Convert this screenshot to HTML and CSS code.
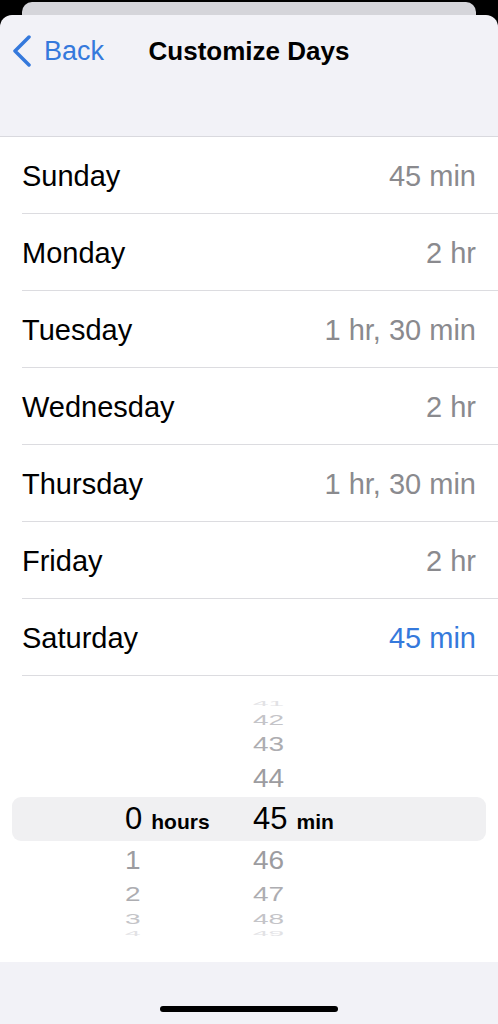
FILE: index.html
```html
<!DOCTYPE html>
<html lang="en">
<head>
    <meta charset="UTF-8">
    <meta name="viewport" content="width=device-width, initial-scale=1.0">
    <title>Customize Days</title>
    <link rel="stylesheet" href="styles.css">
</head>
<body>

    <!-- Sheet behind the current one -->
    <div class="back-sheet"></div>

    <div class="sheet">

        <!-- Navigation -->
        <nav class="nav">
            <a href="#" class="nav-back">
                <svg width="20" height="32" viewBox="0 0 20 32">
                    <path d="M17 2 L3 16 L17 30" fill="none" stroke="#3579dc" stroke-width="3.5" stroke-linecap="round" stroke-linejoin="round"/>
                </svg>
                <span>Back</span>
            </a>
            <h1 class="nav-title">Customize Days</h1>
            <span></span>
        </nav>

        <!-- Days list -->
        <ul class="day-list">
            <li class="day-row"><span>Sunday</span><span class="day-value">45 min</span></li>
            <li class="day-row"><span>Monday</span><span class="day-value">2 hr</span></li>
            <li class="day-row"><span>Tuesday</span><span class="day-value">1 hr, 30 min</span></li>
            <li class="day-row"><span>Wednesday</span><span class="day-value">2 hr</span></li>
            <li class="day-row"><span>Thursday</span><span class="day-value">1 hr, 30 min</span></li>
            <li class="day-row"><span>Friday</span><span class="day-value">2 hr</span></li>
            <li class="day-row"><span>Saturday</span><span class="day-value active">45 min</span></li>
        </ul>

        <!-- Time picker -->
        <div class="picker">
            <div class="pick-row far4"><span class="hrs"></span><span class="mins">41</span></div>
            <div class="pick-row far3"><span class="hrs"></span><span class="mins">42</span></div>
            <div class="pick-row far2"><span class="hrs"></span><span class="mins">43</span></div>
            <div class="pick-row far1"><span class="hrs"></span><span class="mins">44</span></div>
            <div class="pick-row selected">
                <span class="hrs">0<b>hours</b></span>
                <span class="mins">45<b>min</b></span>
            </div>
            <div class="pick-row far1"><span class="hrs">1</span><span class="mins">46</span></div>
            <div class="pick-row far2"><span class="hrs">2</span><span class="mins">47</span></div>
            <div class="pick-row far3"><span class="hrs">3</span><span class="mins">48</span></div>
            <div class="pick-row far4"><span class="hrs">4</span><span class="mins">49</span></div>
        </div>

        <!-- Bottom bar -->
        <div class="toolbar">
            <div class="home-indicator"></div>
        </div>
    </div>

</body>
</html>
```

FILE: styles.css
```css
/* Basic Reset */
* {
    margin: 0;
    padding: 0;
    box-sizing: border-box;
}

body {
    font-family: "Liberation Sans", Arial, sans-serif;
    background-color: #000;
    width: 498px;
    height: 1024px;
    overflow: hidden;
}

/* Stacked sheets */
.back-sheet {
    height: 13px;
    margin: 2px 22px 0;
    background-color: #d5d5da;
    border-radius: 10px 10px 0 0;
}

.sheet {
    background-color: #f2f2f7;
    border-radius: 12px 12px 0 0;
    height: 1009px;
}

/* Navigation */
.nav {
    height: 72px;
    display: grid;
    grid-template-columns: 1fr auto 1fr;
    align-items: center;
}

.nav-back {
    display: flex;
    align-items: center;
    gap: 12px;
    padding-left: 12px;
    color: #3579dc;
    text-decoration: none;
    font-size: 27px;
}

.nav-back svg {
    display: block;
}

.nav-title {
    font-size: 26px;
    font-weight: bold;
    color: #000;
}

/* Days list */
.day-list {
    list-style: none;
    margin-top: 49px;
    background-color: #fff;
    border-top: 1px solid #d9d9de;
}

.day-row {
    height: 77px;
    margin-left: 22px;
    padding: 3px 22px 0 0;
    display: flex;
    justify-content: space-between;
    align-items: center;
    border-bottom: 1px solid #dcdce0;
    font-size: 29px;
    color: #000;
}

.day-value {
    color: #8a8a8e;
}

.day-value.active {
    color: #3579dc;
}

/* Picker */
.picker {
    background-color: #fff;
    padding: 22px 0;
}

.pick-row {
    display: flex;
    align-items: center;
    margin: 0 12px;
    padding-left: 113px;
    font-size: 28px;
}

.pick-row .hrs {
    width: 128px;
}

.pick-row span {
    display: inline-block;
}

.far1 { height: 38px; color: #9c9ca0; }
.far2 { height: 30px; color: #adadb1; }
.far3 { height: 19px; color: #c4c4c8; }
.far4 { height: 12px; color: #e2e2e5; }

.far1 span { transform: scaleY(0.95); }
.far2 span { transform: scaleY(0.75); }
.far3 span { transform: scaleY(0.5); }
.far4 span { transform: scaleY(0.25); }

.selected {
    height: 44px;
    background-color: #f0f0f2;
    border-radius: 9px;
    color: #000;
    font-size: 31px;
}

.selected b {
    font-size: 21px;
    margin-left: 9px;
}

/* Bottom bar */
.toolbar {
    height: 62px;
    padding-top: 44px;
}

.home-indicator {
    width: 178px;
    height: 6px;
    margin: 0 auto;
    background-color: #000;
    border-radius: 3px;
}
```
